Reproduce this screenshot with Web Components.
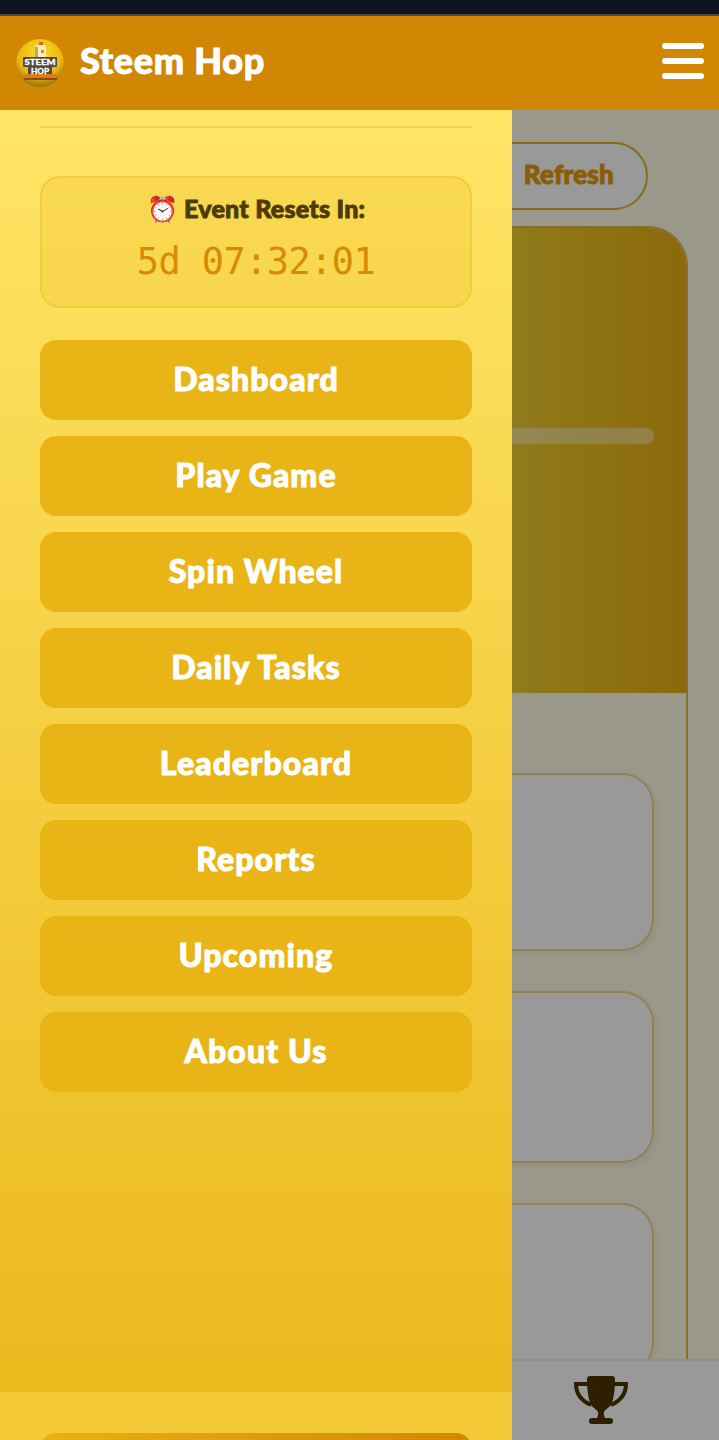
<!DOCTYPE html>
<html lang="en">
<head>
<meta charset="utf-8">
<title>Steem Hop</title>
<style>
  html, body { margin: 0; padding: 0; height: 100%; }
  body { font-family: "Lato", "Liberation Sans", sans-serif; overflow: hidden; }
</style>
</head>
<body>
<app-shell>
  <status-strip></status-strip>
  <top-bar title="Steem Hop"></top-bar>
  <div style="position:relative;flex:1;min-height:0;overflow:hidden;display:flex;flex-direction:column">
    <page-content></page-content>
    <bottom-nav></bottom-nav>
    <drawer-scrim></drawer-scrim>
    <nav-drawer>
      <reset-timer label="Event Resets In:" time="5d 07:32:01"></reset-timer>
      <menu-button>Dashboard</menu-button>
      <menu-button>Play Game</menu-button>
      <menu-button>Spin Wheel</menu-button>
      <menu-button>Daily Tasks</menu-button>
      <menu-button>Leaderboard</menu-button>
      <menu-button>Reports</menu-button>
      <menu-button>Upcoming</menu-button>
      <menu-button>About Us</menu-button>
    </nav-drawer>
  </div>
</app-shell>

<script>
const ROUND_FONT = `font-family: "Lato", "Liberation Sans", sans-serif; font-weight: 900;`;

class BaseElement extends HTMLElement {
  constructor(html) {
    super();
    this.attachShadow({ mode: 'open' }).innerHTML = html;
  }
}

class AppShell extends BaseElement {
  constructor() {
    super(`<style>
      :host { display: flex; flex-direction: column; height: 1440px; width: 719px; background: #fffde7; }
    </style><slot></slot>`);
  }
}

class StatusStrip extends BaseElement {
  constructor() {
    super(`<style>
      :host { display: block; height: 14px; background: #0c1520; border-bottom: 2px solid #4a4c4a; }
    </style>`);
  }
}

class SiteLogo extends BaseElement {
  constructor() {
    super(`<style>
      :host { display: block; width: 48px; height: 48px; }
      svg { display: block; }
      text { font-family: "Lato", sans-serif; font-weight: 900; font-size: 8px; fill: #fff; stroke: #fff; stroke-width: .3px; text-anchor: middle; }
    </style>
    <svg width="48" height="48" viewBox="0 0 48 48">
      <defs>
        <radialGradient id="ball" cx="50%" cy="32%" r="70%">
          <stop offset="0" stop-color="#ffdc2e"/>
          <stop offset=".65" stop-color="#edb70c"/>
          <stop offset="1" stop-color="#8f6c12"/>
        </radialGradient>
      </defs>
      <circle cx="24" cy="24" r="24" fill="url(#ball)"/>
      <rect x="19" y="6" width="11" height="13" rx="1" fill="#f5ecc0"/>
      <rect x="19" y="8" width="3" height="10" fill="#a3b562"/>
      <rect x="23" y="3" width="4" height="3" fill="#d2642a"/>
      <rect x="25" y="11" width="3" height="3" fill="#e08a1e"/>
      <rect x="7" y="18" width="34" height="10" rx="1" fill="#4a4a44"/>
      <rect x="12" y="27" width="24" height="8" fill="#4a4a44"/>
      <rect x="8" y="35" width="33" height="6" rx="1" fill="#e07a14"/>
      <path d="M8 39h33v2H8z" fill="#8a4f10"/>
      <text x="24" y="25.500" textLength="31" lengthAdjust="spacingAndGlyphs">STEEM</text>
      <text x="24" y="35" textLength="18" lengthAdjust="spacingAndGlyphs">HOP</text>
    </svg>`);
  }
}

class TopBar extends BaseElement {
  constructor() {
    super(`<style>
      :host { display: flex; align-items: center; height: 94px; flex: none; padding: 0 15px 0 16px; background: #d18703; position: relative; z-index: 3; }
      .title { ${ROUND_FONT} margin: 0 0 6px 16px; flex: 1; color: #fff; font-size: 36px; letter-spacing: .7px; -webkit-text-stroke: 1px #fff; }
      .burger { display: flex; flex-direction: column; gap: 9px; width: 42px; margin-bottom: 4px; }
      .burger span { display: block; height: 6px; border-radius: 3px; background: #fff; }
    </style>
    <site-logo></site-logo>
    <div class="title"></div>
    <div class="burger"><span></span><span></span><span></span></div>`);
  }
  connectedCallback() {
    this.shadowRoot.querySelector('.title').textContent = this.getAttribute('title');
  }
}

class PageContent extends BaseElement {
  constructor() {
    super(`<style>
      :host { display: block; flex: 1; min-height: 0; overflow: hidden; padding: 32px 31px 0 0; }
      .actions { display: flex; justify-content: flex-end; padding-right: 40px; }
      .refresh { ${ROUND_FONT} box-sizing: border-box; height: 68px; width: 200px; display: flex; align-items: center; justify-content: flex-end; padding: 0 32px 4px 0; border: 2px solid #e0b32e; border-radius: 34px; background: #fff; color: #e69b08; font-size: 26px; letter-spacing: .2px; -webkit-text-stroke: 1px #e69b08; }
      .panel { margin-top: 16px; height: 1200px; box-sizing: border-box; background: #fff; border: solid #e0b84a; border-width: 2px 2px 0 0; border-top-right-radius: 40px; overflow: hidden; }
      .hero { height: 465px; padding: 200px 32px 0 0; box-sizing: border-box; background: linear-gradient(90deg, #f0cd30 74%, #e9b010 100%); }
      .bar { height: 16px; border-radius: 8px; background: rgba(255,255,255,.42); }
      .list { background: #fffde7; height: 700px; padding: 80px 32px 0 0; display: flex; flex-direction: column; }
      .item { box-sizing: border-box; background: #fff; border: 2px solid #f0d98a; border-left: 0; border-radius: 0 32px 32px 0; box-shadow: 2px 3px 6px rgba(0,0,0,.05); }
    </style>
    <div class="actions"><div class="refresh">Refresh</div></div>
    <div class="panel">
      <div class="hero"><div class="bar"></div></div>
      <div class="list">
        <div class="item" style="height:178px"></div>
        <div class="item" style="height:172px;margin-top:40px"></div>
        <div class="item" style="height:172px;margin-top:40px"></div>
      </div>
    </div>`);
  }
}

class BottomNav extends BaseElement {
  constructor() {
    super(`<style>
      :host { display: flex; flex: none; height: 79px; justify-content: flex-end; align-items: flex-start; padding-right: 91px; background: #fff; border-top: 2px solid #eee; position: relative; z-index: 1; }
      svg { display: block; margin-top: 15px; }
    </style>
    <svg width="54" height="48" viewBox="0 0 54 48" aria-hidden="true">
      <path fill="#4d3500" d="M13 3a3 3 0 0 1 3-3h22a3 3 0 0 1 3 3c0 9-1 18-3 24-1 4-7 6-8 9-.5 2 0 4 1 6h5a3 3 0 0 1 0 6H18a3 3 0 0 1 0-6h5c1-2 1.500-4 1-6-1-3-7-5-8-9-2-6-3-15-3-24z"/>
      <path fill="none" stroke="#4d3500" stroke-width="4" d="M14 8H2c0 10 6 17 15 21M40 8h12c0 10-6 17-15 21"/>
    </svg>`);
  }
}

class DrawerScrim extends BaseElement {
  constructor() {
    super(`<style>
      :host { display: block; position: absolute; inset: 0; background: rgba(0,0,0,.4); z-index: 2; }
    </style>`);
  }
}

class NavDrawer extends BaseElement {
  constructor() {
    super(`<style>
      :host { display: flex; flex-direction: column; position: absolute; top: 0; bottom: 0; left: 0; width: 512px; z-index: 2; background: #f3ca35; overflow: hidden; }
      .scroll { flex: 1; min-height: 0; padding: 0 40px; background: linear-gradient(180deg, #ffe566, #ebb91e); }
      hr { margin: 16px 0 48px; border: 0; height: 2px; background: #f3d148; }
      .stack { display: flex; flex-direction: column; gap: 16px; }
      ::slotted(reset-timer) { margin-bottom: 16px; }
      .foot { flex: none; height: 48px; padding: 41px 40px 0; box-sizing: border-box; overflow: hidden; }
      .logout { height: 60px; border-radius: 16px; background: linear-gradient(90deg, #ebb015, #d18703); }
    </style>
    <div class="scroll">
      <hr>
      <div class="stack"><slot></slot></div>
    </div>
    <div class="foot"><div class="logout"></div></div>`);
  }
}

class ResetTimer extends BaseElement {
  constructor() {
    super(`<style>
      :host { display: flex; flex-direction: column; align-items: center; box-sizing: border-box; height: 132px; border: 2px solid #f3cc3d; border-radius: 20px; background: rgba(235,180,21,.2); }
      .label { ${ROUND_FONT} margin-top: 14px; color: #4d3b05; font-size: 25px; line-height: 32px; letter-spacing: .25px; -webkit-text-stroke: .9px #4d3b05; white-space: pre; }
      .time { margin-top: 16px; color: #d98a05; font: 37px/44px "DejaVu Sans Mono", monospace; letter-spacing: -.6px; white-space: pre; }
    </style>
    <div class="label"></div>
    <div class="time"></div>`);
  }
  connectedCallback() {
    this.shadowRoot.querySelector('.label').textContent = '\u23F0 ' + this.getAttribute('label');
    this.shadowRoot.querySelector('.time').textContent = this.getAttribute('time');
  }
}

class MenuButton extends BaseElement {
  constructor() {
    super(`<style>
      :host { ${ROUND_FONT} display: flex; align-items: center; justify-content: center; box-sizing: border-box; height: 80px; padding-bottom: 4px; border-radius: 16px; background: #e9b415; color: #fff; font-size: 32px; letter-spacing: 1.1px; -webkit-text-stroke: 1px #fff; }
    </style><slot></slot>`);
  }
}

customElements.define('app-shell', AppShell);
customElements.define('status-strip', StatusStrip);
customElements.define('site-logo', SiteLogo);
customElements.define('top-bar', TopBar);
customElements.define('page-content', PageContent);
customElements.define('bottom-nav', BottomNav);
customElements.define('drawer-scrim', DrawerScrim);
customElements.define('nav-drawer', NavDrawer);
customElements.define('reset-timer', ResetTimer);
customElements.define('menu-button', MenuButton);
</script>
</body>
</html>
